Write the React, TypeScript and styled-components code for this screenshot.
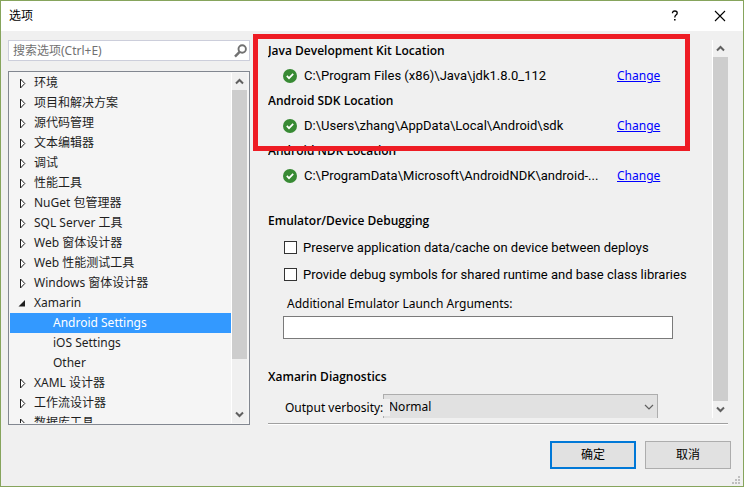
import React from "react";
import styled, { createGlobalStyle, css } from "styled-components";

const Global = createGlobalStyle`
  *, *::before, *::after { box-sizing: border-box; }
  body { margin: 0; background: #f0f0f0; }
  body, button, input, select {
    font-family: "Noto Sans", "Noto Sans CJK SC", sans-serif;
    font-size: 12px;
    line-height: 20px;
    color: #000;
  }
`;

const Dialog = styled.main`
  display: flex;
  flex-direction: column;
  height: 100vh;
  border: 1px solid #86a45c;
  background: #f0f0f0;
`;

const TitleBar = styled.header`
  display: flex;
  align-items: center;
  flex: none;
  height: 30px;
  padding: 0 17px 0 8px;
  background: #fff;
`;

const Title = styled.h1`
  flex: 1;
  margin: 0;
  font-size: 12px;
  font-weight: 400;
`;

const TitleButton = styled.button`
  display: grid;
  place-items: center;
  width: 12px;
  height: 24px;
  margin-left: 33px;
  padding: 0;
  border: 0;
  background: transparent;
`;

const Body = styled.div`
  display: grid;
  grid-template-columns: 242px minmax(0, 1fr);
  grid-template-rows: minmax(0, 1fr);
  column-gap: 18px;
  flex: 1;
  min-height: 0;
  padding: 9px 15px 0 7px;
`;

const Sidebar = styled.nav`
  display: flex;
  flex-direction: column;
  gap: 10px;
  min-height: 0;
`;

const SearchBox = styled.label`
  display: flex;
  align-items: center;
  flex: none;
  height: 21px;
  padding: 0 2px 0 4px;
  border: 1px solid #cccedb;
  background: #fff;
`;

const SearchInput = styled.input`
  flex: 1;
  min-width: 0;
  height: 19px;
  padding: 0;
  border: 0;
  outline: 0;
  background: transparent;
  &::placeholder { color: #717171; opacity: 1; }
`;

const TreeFrame = styled.div`
  display: flex;
  flex: 1;
  min-height: 0;
  padding: 1px;
  border: 1px solid #828790;
  background: #f5f5f5;
`;

const Tree = styled.ul`
  flex: 1;
  min-width: 0;
  margin: 0;
  padding: 0;
  overflow: hidden;
  list-style: none;
`;

const TreeItem = styled.li<{ $child?: boolean; $selected?: boolean }>`
  display: flex;
  align-items: center;
  height: 20px;
  padding-left: ${(p) => (p.$child ? 43 : 8)}px;
  white-space: nowrap;
  color: #1e1e1e;
  ${(p) => p.$selected && css`
    background: #3399ff;
    color: #fff;
  `}
`;

const Bar = styled.div<{ $inset?: number }>`
  display: flex;
  flex-direction: column;
  flex: none;
  width: 16px;
  margin-right: ${(p) => p.$inset ?? 0}px;
  border-left: 1px solid #fff;
  background: #f0f0f0;
`;

const BarButton = styled.button`
  display: grid;
  place-items: center;
  flex: none;
  height: 17px;
  padding: 0;
  border: 0;
  background: transparent;
`;

const Track = styled.div`
  flex: 1;
  min-height: 0;
`;

const Thumb = styled.div<{ $size: number }>`
  height: ${(p) => p.$size}%;
  background: #cdcdcd;
`;

const Panel = styled.section`
  position: relative;
  display: flex;
  flex-direction: column;
  min-height: 0;
`;

const Scroller = styled.div`
  display: flex;
  flex: 1;
  min-height: 0;
`;

const Content = styled.div`
  flex: 1;
  min-width: 0;
  overflow: hidden;
`;

const Divider = styled.hr`
  flex: none;
  width: 100%;
  height: 2px;
  margin: 5px 0 0;
  border: 0;
  border-top: 1px solid #a0a0a0;
  background: #fff;
`;

const Highlight = styled.div`
  position: absolute;
  top: -6px;
  left: -15px;
  right: 38px;
  height: 117px;
  border: 5px solid #ee1c24;
  pointer-events: none;
`;

const Group = styled.section<{ $gap?: number }>`
  margin-top: ${(p) => p.$gap ?? 0}px;
`;

const Heading = styled.h2`
  margin: 0;
  font-family: "Open Sans", sans-serif;
  font-size: 12px;
  font-weight: 600;
  line-height: 22px;
`;

const LocationRow = styled.div`
  display: grid;
  grid-template-columns: 14px minmax(0, 1fr) 44px;
  column-gap: 7px;
  align-items: center;
  height: 28px;
  padding: 0 51px 0 15px;
  white-space: nowrap;
`;

const LocationPath = styled.span`
  font-family: Roboto, sans-serif;
  font-size: 13px;
`;

const ChangeLink = styled.a`
  color: #0000ff;
  text-decoration: underline;
`;

const CheckRow = styled.label`
  display: flex;
  align-items: center;
  gap: 6px;
  height: 27px;
  padding-left: 16px;
  font-family: Roboto, sans-serif;
  font-size: 13px;
  white-space: nowrap;
`;

const CheckBox = styled.input`
  appearance: none;
  flex: none;
  width: 13px;
  height: 13px;
  margin: 0;
  border: 1px solid #333;
  background: #fff;
  &:checked { box-shadow: inset 0 0 0 2px #fff; background: #333; }
`;

const Checks = styled.div`
  padding-top: 2px;
`;

const Field = styled.div`
  display: flex;
  flex-direction: column;
  padding: 6px 39px 0 15px;
`;

const FieldLabel = styled.label`
  padding: 0 0 2px 4px;
`;

const TextInput = styled.input`
  height: 23px;
  padding: 0 4px;
  border: 1px solid #7a7a7a;
  background: #fff;
`;

const ComboRow = styled.div`
  display: flex;
  align-items: center;
  padding: 6px 54px 0 17px;
`;

const ComboLabel = styled.label`
  position: relative;
  z-index: 1;
  flex: none;
  width: 105px;
  margin-right: -7px;
  line-height: 17px;
  white-space: nowrap;
  background: #f0f0f0;
`;

const Combo = styled.div`
  display: grid;
  align-items: center;
  flex: 1;
  > * { grid-area: 1 / 1; }
  svg { justify-self: end; margin-right: 4px; pointer-events: none; }
`;

const Select = styled.select`
  appearance: none;
  width: 100%;
  height: 26px;
  padding: 0 20px 0 5px;
  border: 1px solid #adadad;
  border-radius: 0;
  background: #e1e1e1;
`;

const Footer = styled.footer`
  display: flex;
  justify-content: flex-end;
  align-items: flex-start;
  gap: 9px;
  flex: none;
  height: 61px;
  padding: 16px 3px 0 0;
`;

const DialogButton = styled.button<{ $primary?: boolean }>`
  width: 86px;
  height: 28px;
  padding: 0;
  border: ${(p) => (p.$primary ? "2px solid #0078d7" : "1px solid #adadad")};
  background: #e1e1e1;
`;

const Grip = styled.svg`
  align-self: flex-end;
  margin: 0 0 2px -8px;
`;

const Closed = () => (
  <svg width="16" height="12" viewBox="0 0 16 12" aria-hidden="true">
    <path d="M2.5 2v9L6.8 6.5z" fill="#fff" stroke="#1e1e1e" />
  </svg>
);

const Opened = () => (
  <svg width="16" height="12" viewBox="0 0 16 12" aria-hidden="true">
    <path d="M7 3v6.5H.5z" fill="#1e1e1e" />
  </svg>
);

const Chevron = ({ down }: { down?: boolean }) => (
  <svg width="9" height="7" viewBox="0 0 9 7" aria-hidden="true">
    <path d={down ? "M1 1.5l3.5 3.5L8 1.5" : "M1 5.5L4.5 2L8 5.5"} fill="none" stroke="#606060" strokeWidth="2" />
  </svg>
);

const CheckMark = () => (
  <svg width="14" height="14" viewBox="0 0 14 14" role="img" aria-label="Found">
    <circle cx="7" cy="7" r="7" fill="#388a34" />
    <path d="M3.8 6.9l2.2 2.3 4.2-4.4" fill="none" stroke="#fff" strokeWidth="1.7" />
  </svg>
);

const ScrollBar = ({ size, inset }: { size: number; inset?: number }) => (
  <Bar $inset={inset}>
    <BarButton type="button" aria-label="Scroll up"><Chevron /></BarButton>
    <Track><Thumb $size={size} /></Track>
    <BarButton type="button" aria-label="Scroll down"><Chevron down /></BarButton>
  </Bar>
);

type Node = { label: string; open?: boolean; child?: boolean; selected?: boolean };

const nodes: Node[] = [
  { label: "环境" },
  { label: "项目和解决方案" },
  { label: "源代码管理" },
  { label: "文本编辑器" },
  { label: "调试" },
  { label: "性能工具" },
  { label: "NuGet 包管理器" },
  { label: "SQL Server 工具" },
  { label: "Web 窗体设计器" },
  { label: "Web 性能测试工具" },
  { label: "Windows 窗体设计器" },
  { label: "Xamarin", open: true },
  { label: "Android Settings", child: true, selected: true },
  { label: "iOS Settings", child: true },
  { label: "Other", child: true },
  { label: "XAML 设计器" },
  { label: "工作流设计器" },
  { label: "数据库工具" },
];

const locations = [
  { title: "Java Development Kit Location", path: "C:\\Program Files (x86)\\Java\\jdk1.8.0_112" },
  { title: "Android SDK Location", path: "D:\\Users\\zhang\\AppData\\Local\\Android\\sdk" },
  { title: "Android NDK Location", path: "C:\\ProgramData\\Microsoft\\AndroidNDK\\android-..." },
];

export default function App() {
  return (
    <>
      <Global />
      <Dialog>
        <TitleBar>
          <Title>选项</Title>
          <TitleButton type="button" aria-label="Help">
            <svg width="8" height="12" viewBox="0 0 8 12" aria-hidden="true">
              <path d="M1.5 3.2V2.6Q1.8 1 3.8 1Q6.2 1 6.2 3Q6.2 4.2 5 5.1Q3.8 6 3.8 7.6" fill="none" stroke="#000" strokeWidth="1.3" />
              <path d="M3 9h1.6v1.6H3z" />
            </svg>
          </TitleButton>
          <TitleButton type="button" aria-label="Close">
            <svg width="12" height="12" viewBox="0 0 12 12" aria-hidden="true">
              <path d="M1 1l10 10M11 1L1 11" stroke="#000" strokeWidth="1.1" />
            </svg>
          </TitleButton>
        </TitleBar>
        <Body>
          <Sidebar>
            <SearchBox>
              <SearchInput type="search" aria-label="搜索选项" placeholder="搜索选项(Ctrl+E)" />
              <svg width="13" height="14" viewBox="0 0 13 14" aria-hidden="true">
                <circle cx="8.2" cy="5" r="3.7" fill="none" stroke="#717171" strokeWidth="1.9" />
                <path d="M5.6 7.8L1 12.6" stroke="#717171" strokeWidth="2.4" />
              </svg>
            </SearchBox>
            <TreeFrame>
              <Tree>
                {nodes.map((n) => (
                  <TreeItem key={n.label} $child={n.child} $selected={n.selected}>
                    {!n.child && (n.open ? <Opened /> : <Closed />)}
                    {n.label}
                  </TreeItem>
                ))}
              </Tree>
              <ScrollBar size={85} inset={1} />
            </TreeFrame>
          </Sidebar>
          <Panel>
            <Scroller>
              <Content>
                {locations.map((l) => (
                  <Group key={l.title}>
                    <Heading>{l.title}</Heading>
                    <LocationRow>
                      <CheckMark />
                      <LocationPath>{l.path}</LocationPath>
                      <ChangeLink href="#">Change</ChangeLink>
                    </LocationRow>
                  </Group>
                ))}
                <Group $gap={20}>
                  <Heading>Emulator/Device Debugging</Heading>
                  <Checks>
                    <CheckRow>
                      <CheckBox type="checkbox" />
                      Preserve application data/cache on device between deploys
                    </CheckRow>
                    <CheckRow>
                      <CheckBox type="checkbox" />
                      Provide debug symbols for shared runtime and base class libraries
                    </CheckRow>
                  </Checks>
                  <Field>
                    <FieldLabel htmlFor="args">Additional Emulator Launch Arguments:</FieldLabel>
                    <TextInput id="args" type="text" />
                  </Field>
                </Group>
                <Group $gap={27}>
                  <Heading>Xamarin Diagnostics</Heading>
                  <ComboRow>
                    <ComboLabel htmlFor="verbosity">Output verbosity:</ComboLabel>
                    <Combo>
                      <Select id="verbosity" defaultValue="Normal">
                        <option>Normal</option>
                      </Select>
                      <svg width="10" height="6" viewBox="0 0 10 6" aria-hidden="true">
                        <path d="M1 1l4 4 4-4" fill="none" stroke="#606060" strokeWidth="1.2" />
                      </svg>
                    </Combo>
                  </ComboRow>
                </Group>
              </Content>
              <ScrollBar size={100} />
            </Scroller>
            <Divider />
            <Highlight />
          </Panel>
        </Body>
        <Footer>
          <DialogButton type="button" $primary>确定</DialogButton>
          <DialogButton type="button">取消</DialogButton>
          <Grip width="8" height="8" viewBox="0 0 8 8" aria-hidden="true">
            <path d="M6 0h2v2H6zM3 3h2v2H3zM6 3h2v2H6zM0 6h2v2H0zM3 6h2v2H3zM6 6h2v2H6z" fill="#bfbfbf" />
          </Grip>
        </Footer>
      </Dialog>
    </>
  );
}
